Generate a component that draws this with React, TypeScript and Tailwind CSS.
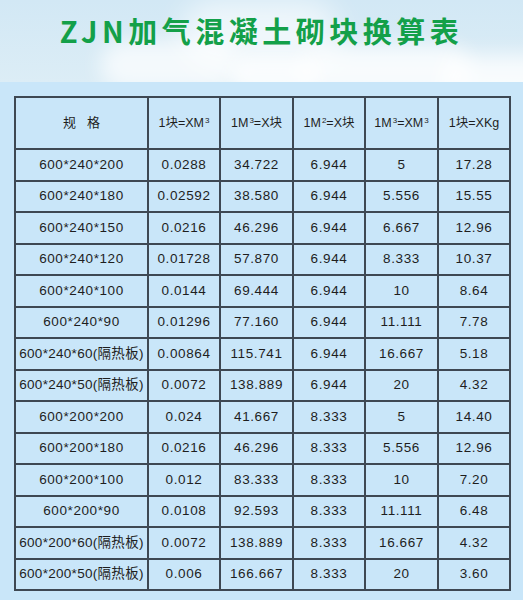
import React from "react";

const rows: string[][] = [
  ["600*240*200", "0.0288", "34.722", "6.944", "5", "17.28"],
  ["600*240*180", "0.02592", "38.580", "6.944", "5.556", "15.55"],
  ["600*240*150", "0.0216", "46.296", "6.944", "6.667", "12.96"],
  ["600*240*120", "0.01728", "57.870", "6.944", "8.333", "10.37"],
  ["600*240*100", "0.0144", "69.444", "6.944", "10", "8.64"],
  ["600*240*90", "0.01296", "77.160", "6.944", "11.111", "7.78"],
  ["600*240*60(隔热板)", "0.00864", "115.741", "6.944", "16.667", "5.18"],
  ["600*240*50(隔热板)", "0.0072", "138.889", "6.944", "20", "4.32"],
  ["600*200*200", "0.024", "41.667", "8.333", "5", "14.40"],
  ["600*200*180", "0.0216", "46.296", "8.333", "5.556", "12.96"],
  ["600*200*100", "0.012", "83.333", "8.333", "10", "7.20"],
  ["600*200*90", "0.0108", "92.593", "8.333", "11.111", "6.48"],
  ["600*200*60(隔热板)", "0.0072", "138.889", "8.333", "16.667", "4.32"],
  ["600*200*50(隔热板)", "0.006", "166.667", "8.333", "20", "3.60"],
];

const font = { fontFamily: '"Liberation Sans", "Noto Sans CJK SC", sans-serif' };

function Sup({ children }: { children: React.ReactNode }) {
  return <sup className="text-[8px] relative -top-[4px] ml-[1px]">{children}</sup>;
}

export default function App() {
  return (
    <div className="w-[523px] h-[600px] bg-[#c9e6f9] overflow-hidden" style={font}>
      <div className="relative h-[82px] overflow-hidden bg-gradient-to-b from-[#d2e8f5] to-[#dcedf6]">
        <div className="absolute left-[100px] top-[40px] w-[140px] h-[50px] rounded-full bg-white/70 blur-[10px]" />
        <div className="absolute left-[180px] top-[0px] w-[160px] h-[70px] rounded-full bg-white/60 blur-[14px]" />
        <div className="absolute left-[300px] top-[45px] w-[170px] h-[50px] rounded-full bg-white/80 blur-[10px]" />
        <div className="absolute left-[440px] top-[55px] w-[120px] h-[50px] rounded-full bg-white/80 blur-[10px]" />
        <div className="absolute left-[230px] top-[55px] w-[90px] h-[40px] rounded-full bg-white/80 blur-[8px]" />
        <div className="relative flex justify-center pt-[11px]">
          <h1
            className="text-[29px] leading-[38px] font-bold text-[#13a049] tracking-[4.5px]"
            style={{ fontFamily: '"Noto Sans CJK SC", sans-serif' }}
          >
            ZJN加气混凝土砌块换算表
          </h1>
        </div>
      </div>
      <div className="pl-[14px] pt-[14px]">
        <table className="border-collapse text-[#1e1e1e] text-[13.5px] text-center">
          <colgroup>
            <col className="w-[133px]" />
            <col className="w-[72px]" />
            <col className="w-[73px]" />
            <col className="w-[72px]" />
            <col className="w-[73px]" />
            <col className="w-[72px]" />
          </colgroup>
          <thead>
            <tr className="h-[52px]">
              <th className="border-2 border-[#3e4853] font-normal text-[13px]">规&nbsp;&nbsp;&nbsp;格</th>
              <th className="border-2 border-[#3e4853] font-normal text-[12.5px] whitespace-nowrap">
                1块=XM<Sup>3</Sup>
              </th>
              <th className="border-2 border-[#3e4853] font-normal text-[12.5px] whitespace-nowrap">
                1M<Sup>3</Sup>=X块
              </th>
              <th className="border-2 border-[#3e4853] font-normal text-[12.5px] whitespace-nowrap">
                1M<Sup>2</Sup>=X块
              </th>
              <th className="border-2 border-[#3e4853] font-normal text-[12.5px] whitespace-nowrap">
                1M<Sup>3</Sup>=XM<Sup>3</Sup>
              </th>
              <th className="border-2 border-[#3e4853] font-normal text-[12.5px] whitespace-nowrap">1块=XKg</th>
            </tr>
          </thead>
          <tbody>
            {rows.map((r, i) => (
              <tr key={i} className="h-[31.5px]">
                {r.map((c, j) => (
                  <td
                    key={j}
                    className={
                      j === 0 && c.includes("(")
                        ? "border-2 border-[#3e4853] whitespace-nowrap tracking-[0.3px] p-0"
                        : "border-2 border-[#3e4853] whitespace-nowrap tracking-[0.6px] p-0"
                    }
                  >
                    {c}
                  </td>
                ))}
              </tr>
            ))}
          </tbody>
        </table>
      </div>
    </div>
  );
}
